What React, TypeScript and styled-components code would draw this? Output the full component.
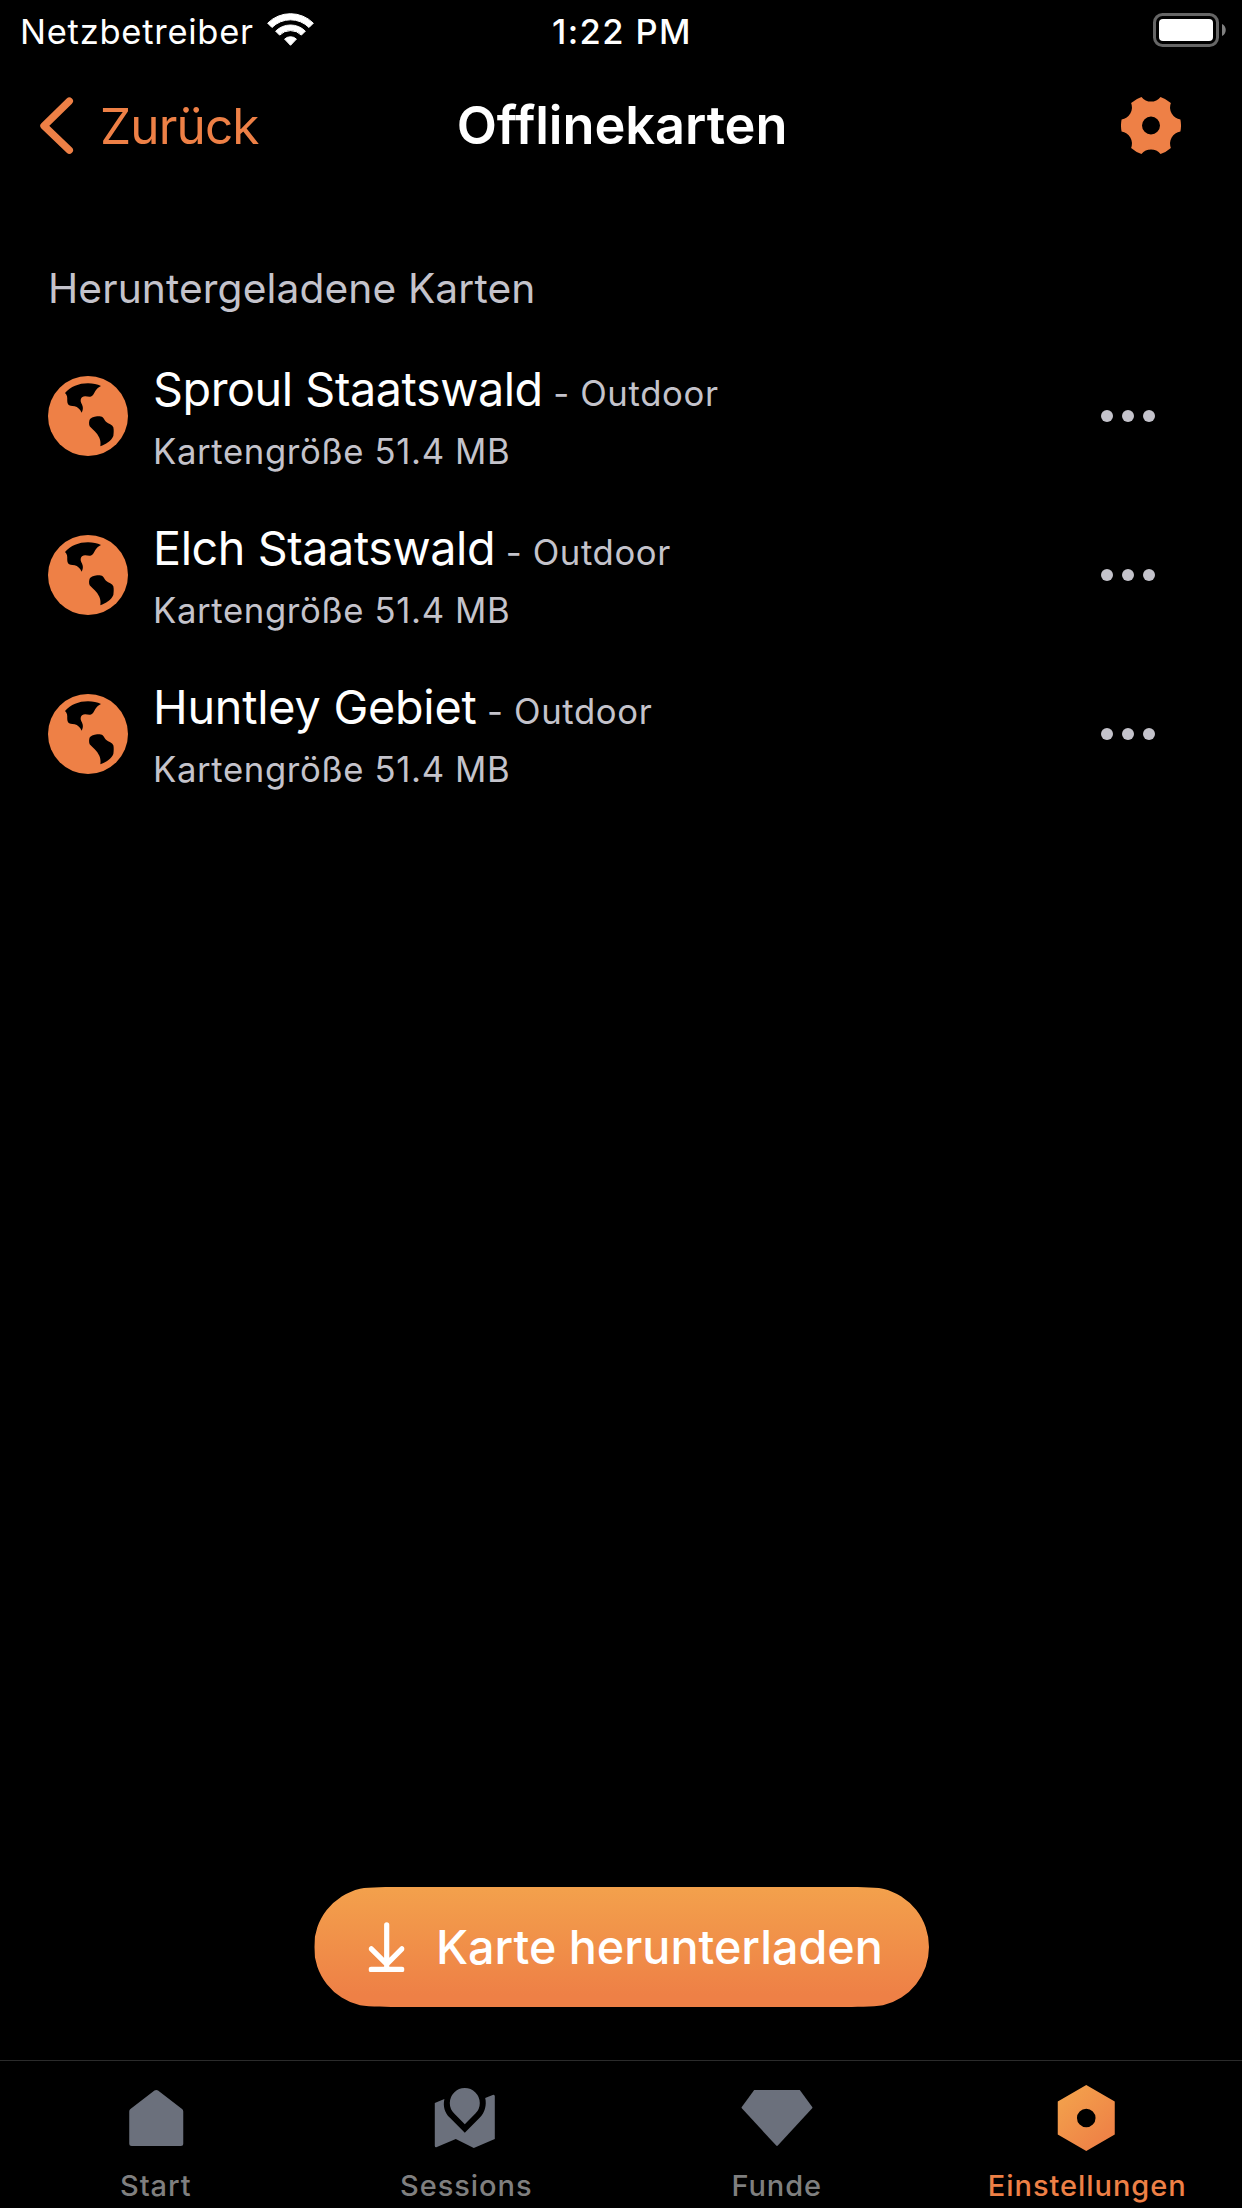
import React from 'react';
import styled, { createGlobalStyle } from 'styled-components';

const orange = '#ee8046';
const amber = '#f3a14c';
const silver = '#c4c3cb';
const slate = '#6b707c';

const GlobalStyle = createGlobalStyle`
  * { box-sizing: border-box; }
  body { margin: 0; background: #000; }
`;

const Screen = styled.div`
  width: 1242px;
  height: 2208px;
  display: flex;
  flex-direction: column;
  background: #000;
  color: #fff;
  font-family: Inter, Roboto, sans-serif;
  overflow: hidden;
`;

const StatusBar = styled.header`
  flex: none;
  height: 60px;
  padding: 0 16px 0 20px;
  display: grid;
  grid-template-columns: 1fr auto 1fr;
  align-items: start;
  font-size: 34.5px;
  line-height: 63px;
  white-space: nowrap;
`;

const Carrier = styled.div`
  display: flex;
  letter-spacing: 0.75px;
  svg { margin: 13px 0 0 13.8px; }
`;

const Clock = styled.time`
  font-weight: 500;
  letter-spacing: 1.4px;
  transform: translateX(-1px);
`;

const BatterySlot = styled.div`
  display: flex;
  justify-content: flex-end;
  padding-top: 13px;
`;

const NavBar = styled.nav`
  flex: none;
  height: 132px;
  padding: 0 61px 0 40px;
  display: grid;
  grid-template-columns: 1fr auto 1fr;
  align-items: center;
  line-height: 60px;
`;

const BackButton = styled.button`
  display: flex;
  align-items: center;
  gap: 25px;
  padding: 0;
  border: 0;
  background: none;
  color: ${orange};
  font: 400 49.5px/60px Inter, Roboto, sans-serif;
  letter-spacing: -0.85px;
`;

const Title = styled.h1`
  margin: 0;
  font-size: 52.3px;
  font-weight: 600;
  line-height: 60px;
  letter-spacing: -0.05px;
  transform: translate(11.5px, -1px);
`;

const GearButton = styled.button`
  justify-self: end;
  display: flex;
  padding: 0;
  border: 0;
  background: none;
  color: ${orange};
`;

const Main = styled.main`
  flex: 1;
  display: flex;
  flex-direction: column;
  padding: 69px 48px 53px;
`;

const SectionTitle = styled.h2`
  margin: 0 0 19px;
  font-size: 40.7px;
  font-weight: 400;
  line-height: 56px;
  letter-spacing: 0.12px;
  color: ${silver};
`;

const MapList = styled.ul`
  margin: 0;
  padding: 0;
  list-style: none;
`;

const MapRow = styled.li`
  height: 159px;
  display: flex;
  align-items: flex-start;
  padding: 23px 39px 0 0;
`;

const GlobeSlot = styled.span`
  display: flex;
  padding-top: 17px;
  color: ${orange};
`;

const MapText = styled.div`
  flex: 1;
  margin-left: 25px;
`;

const MapHeading = styled.div`
  display: flex;
  align-items: baseline;
  gap: 10.5px;
  height: 61.5px;
  line-height: 60px;
`;

const MapName = styled.span<{ $tracking: number }>`
  font-size: 46.7px;
  letter-spacing: ${(p) => p.$tracking}px;
`;

const Detail = styled.span`
  font-size: 34.7px;
  line-height: 60px;
  letter-spacing: 0.63px;
  color: ${silver};
`;

const SizeLine = styled.div`
  display: flex;
`;

const MoreButton = styled.button`
  display: flex;
  gap: 9px;
  margin-top: 51px;
  padding: 0;
  border: 0;
  background: none;
`;

const Dot = styled.i`
  width: 12px;
  height: 12px;
  border-radius: 50%;
  background: ${silver};
`;

const DownloadButton = styled.button`
  align-self: center;
  margin-top: auto;
  width: 615px;
  height: 120px;
  padding: 0 0 0 54px;
  display: flex;
  align-items: center;
  border: 0;
  background: linear-gradient(180deg, ${amber} 0%, ${orange} 90%);
  clip-path: path('M89 0 C74 0 56 0 46 1.66 A60 60 0 0 0 46 118.34 C56 120 74 120 89 120 L526 120 C541 120 559 120 569 118.34 A60 60 0 0 0 569 1.66 C559 0 541 0 526 0Z');
  transform: translateX(0.5px);
  color: #fff;
  font: 500 46.7px/60px Inter, Roboto, sans-serif;
  white-space: nowrap;
  svg { margin-right: 32px; }
`;

const TabBar = styled.footer`
  flex: none;
  height: 148px;
  display: grid;
  grid-template-columns: repeat(4, 1fr);
  border-top: 1px solid #2b2b2b;
`;

const Tab = styled.a<{ $active?: boolean }>`
  display: flex;
  flex-direction: column;
  align-items: center;
  gap: 13.5px;
  padding: 21px 0 0 1px;
  color: ${(p) => (p.$active ? orange : '#7f7f7f')};
  font-size: 29px;
  font-weight: 500;
  line-height: 36px;
  letter-spacing: 0.95px;
`;

const Wifi = () => {
  const k = Math.SQRT1_2;
  const cx = 22.5;
  const cy = 33;
  const band = (outer: number, inner: number) =>
    `M${cx - outer * k} ${cy - outer * k}A${outer} ${outer} 0 0 1 ${cx + outer * k} ${cy - outer * k}` +
    `L${cx + inner * k} ${cy - inner * k}A${inner} ${inner} 0 0 0 ${cx - inner * k} ${cy - inner * k}Z`;
  return (
    <svg width="45" height="33" viewBox="0 0 45 33" fill="#fff" stroke="#fff" strokeWidth="1" strokeLinejoin="round" overflow="visible">
      <path d={band(32.3, 26.2)} />
      <path d={band(21, 15.4)} />
      <path d="M22.5 32.3L16.6 26.1A8.6 8.6 0 0 1 28.4 26.1Z" />
    </svg>
  );
};

const Battery = () => (
  <svg width="73" height="34" viewBox="0 0 73 34">
    <rect x="1.5" y="1.5" width="63" height="31" rx="8" fill="none" stroke="#666" strokeWidth="3" />
    <rect x="6" y="6" width="54" height="22" rx="4" fill="#fff" />
    <path d="M69 11C74 13 74 21 69 23Z" fill="#808080" />
  </svg>
);

const Chevron = () => (
  <svg width="35" height="60" viewBox="0 0 35 60" fill="none" stroke="currentColor" strokeWidth="7.4" strokeLinecap="round" strokeLinejoin="round">
    <path d="M29.3 5.1L4 29.8L29.3 54.2" />
  </svg>
);

const Gear = () => {
  const r = 30;
  const half = 18.5;
  const at = (deg: number) => {
    const a = (deg * Math.PI) / 180;
    return `${(30 + r * Math.cos(a)).toFixed(2)} ${(30 + r * Math.sin(a)).toFixed(2)}`;
  };
  const d = [0, 1, 2, 3, 4, 5]
    .map((i) => {
      const notch = 30 + i * 60;
      return `${i ? 'L' : 'M'}${at(notch - half)}A12.2 12.2 0 0 0 ${at(notch + half)}A30 30 0 0 1 ${at(notch + 60 - half)}`;
    })
    .join('');
  return (
    <svg width="60" height="60" viewBox="0 0.5 60 60" fill="currentColor" fillRule="evenodd">
      <path d={`${d}ZM39 30A9 9 0 1 0 21 30A9 9 0 1 0 39 30Z`} />
    </svg>
  );
};

const Globe = () => (
  <svg width="80" height="80" viewBox="24 30 240 240">
    <circle cx="144" cy="150" r="120" fill="currentColor" />
    <path
      d="M75 81C92 62 116 52 144 52C159 52 172 55 183 60C176 64 170 68 166 75C161 84 159 91 151 92C142 93 134 88 126 94C121 98 121 106 124 112C129 121 131 129 125 140C120 130 113 123 104 121C95 119 88 120 84 115C80 108 83 98 81 91C80 87 78 84 75 81Z"
      fill="#000"
    />
    <path
      d="M150 159C158 152 169 151 179 151C190 151 191 160 198 167C206 174 217 175 220 184C222 192 221 203 220 210C214 225 197 235 181 241C182 232 182 224 178 215C171 200 160 193 149 181C146 174 147 164 150 159Z"
      fill="#000"
    />
  </svg>
);

const DownArrow = () => (
  <svg width="36" height="50" viewBox="0 0 36 50" fill="none" stroke="#fff" strokeWidth="5.2" strokeLinecap="round" strokeLinejoin="round">
    <path d="M18.2 2.8V44.5M2.8 26.8L18.2 42.2L33.4 26.8M2.6 47.4H33.4" />
  </svg>
);

const HouseIcon = () => (
  <svg width="72" height="72" viewBox="-0.25 0 72 72" fill={slate}>
    <path d="M34.2 8.6Q36 7.2 37.8 8.6L61.8 27Q63 28 63 29.4V61.5Q63 64 60.5 64H11.5Q9 64 9 61.5V29.4Q9 28 10.2 27Z" />
  </svg>
);

const MapPinIcon = () => (
  <svg width="72" height="72" viewBox="-4.8 -6 72 72" fill={slate}>
    <path d="M19.4 25.6A15 15 0 1 1 40.6 25.6L30 36.2Z" />
    <path d="M0 14.9L9.6 10.9C8 18 9.8 24.6 15.15 29.85L30 44.7L44.85 29.85C50.2 24.5 52 17 50.4 10.1L57.9 6.9Q60 6.2 60 8.3V51L39 60L21 51L2.1 59.1Q0 59.8 0 57.7Z" />
  </svg>
);

const GemIcon = () => (
  <svg width="72" height="72" viewBox="0 0 72 72" fill={slate}>
    <path d="M13.2 8H58.8L71.4 25.3V26L36.8 63.6Q36 64.4 35.2 63.6L.6 26V25.3Z" />
  </svg>
);

const NutIcon = () => (
  <svg width="72" height="72" viewBox="0.75 0 72 72" fillRule="evenodd">
    <defs>
      <linearGradient id="nut" x1="0.1" y1="0.1" x2="0.8" y2="0.95">
        <stop offset="0" stopColor={amber} />
        <stop offset="1" stopColor={orange} />
      </linearGradient>
    </defs>
    <path d="M36 3L64.5 19.5V52.5L36 69L7.5 52.5V19.5ZM45.3 36A9.3 9.3 0 1 0 26.7 36A9.3 9.3 0 1 0 45.3 36Z" fill="url(#nut)" />
  </svg>
);

const maps = [
  { name: 'Sproul Staatswald', tracking: -0.43 },
  { name: 'Elch Staatswald', tracking: -0.42 },
  { name: 'Huntley Gebiet', tracking: -0.22 },
];

const tabs = [
  { label: 'Start', Icon: HouseIcon },
  { label: 'Sessions', Icon: MapPinIcon },
  { label: 'Funde', Icon: GemIcon },
  { label: 'Einstellungen', Icon: NutIcon, active: true },
];

export default function App() {
  return (
    <Screen>
      <GlobalStyle />
      <StatusBar>
        <Carrier>
          Netzbetreiber
          <Wifi />
        </Carrier>
        <Clock>1:22 PM</Clock>
        <BatterySlot>
          <Battery />
        </BatterySlot>
      </StatusBar>
      <NavBar>
        <BackButton>
          <Chevron />
          Zurück
        </BackButton>
        <Title>Offlinekarten</Title>
        <GearButton aria-label="Einstellungen">
          <Gear />
        </GearButton>
      </NavBar>
      <Main>
        <SectionTitle>Heruntergeladene Karten</SectionTitle>
        <MapList>
          {maps.map(({ name, tracking }) => (
            <MapRow key={name}>
              <GlobeSlot>
                <Globe />
              </GlobeSlot>
              <MapText>
                <MapHeading>
                  <MapName $tracking={tracking}>{name}</MapName>
                  <Detail>- Outdoor</Detail>
                </MapHeading>
                <SizeLine>
                  <Detail>Kartengröße 51.4 MB</Detail>
                </SizeLine>
              </MapText>
              <MoreButton aria-label="Mehr">
                <Dot />
                <Dot />
                <Dot />
              </MoreButton>
            </MapRow>
          ))}
        </MapList>
        <DownloadButton>
          <DownArrow />
          Karte herunterladen
        </DownloadButton>
      </Main>
      <TabBar>
        {tabs.map(({ label, Icon, active }) => (
          <Tab key={label} $active={active}>
            <Icon />
            {label}
          </Tab>
        ))}
      </TabBar>
    </Screen>
  );
}
